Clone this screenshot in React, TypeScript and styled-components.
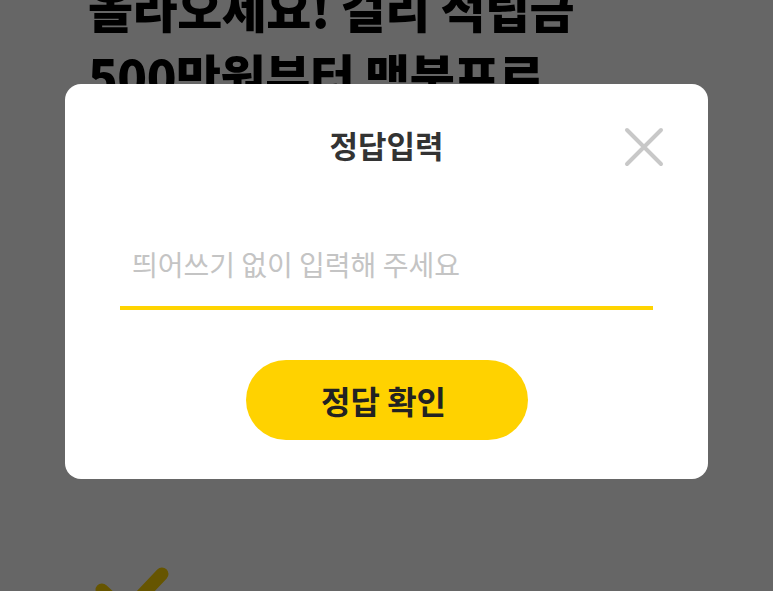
import styled, { createGlobalStyle } from "styled-components"
import { useState } from "react"

const GlobalStyle = createGlobalStyle`
  html, body {
    margin: 0;
    padding: 0;
    background: #fff;
    overflow: hidden;
  }

  body {
    font-family: "Noto Sans CJK KR", "Noto Sans", sans-serif;
  }

  * {
    box-sizing: border-box;
  }
`

const QuizPage = () => {
  const [answer, setAnswer] = useState("")

  return (
    <>
      <GlobalStyle />
      <StyledPage>
        <h1>
          올라오세요! 걸리 적립금
          <br />
          500만원부터 맥북프로
        </h1>
        <svg className="check" width="90" height="60" viewBox="0 0 90 60">
          <polyline
            points="14,30 38,52 74,14"
            fill="none"
            stroke="#ffd400"
            strokeWidth="13"
            strokeLinecap="round"
            strokeLinejoin="round"
          />
        </svg>
      </StyledPage>

      <StyledOverlay>
        <StyledModal>
          <div className="header">
            <span />
            <h2>정답입력</h2>
            <button className="close" aria-label="닫기">
              <svg width="40" height="40" viewBox="0 0 40 40">
                <path
                  d="M3 3 L37 37 M37 3 L3 37"
                  stroke="#c8c8c8"
                  strokeWidth="4"
                  strokeLinecap="round"
                />
              </svg>
            </button>
          </div>

          <input
            value={answer}
            onChange={(e) => setAnswer(e.target.value)}
            placeholder="띄어쓰기 없이 입력해 주세요"
          />

          <button className="submit">정답 확인</button>
        </StyledModal>
      </StyledOverlay>
    </>
  )
}

const StyledPage = styled.div`
  display: flex;
  flex-direction: column;
  align-items: flex-start;
  padding: 0 88px;
  margin-top: -27px;

  h1 {
    margin: 0;
    font-size: 49px;
    line-height: 68px;
    font-weight: 900;
    color: #000;
    white-space: nowrap;
    letter-spacing: -0.5px;
  }

  .check {
    display: block;
    flex-shrink: 0;
    margin-top: 451px;
  }
`

const StyledOverlay = styled.div`
  position: fixed;
  inset: 0;
  background: rgba(0, 0, 0, 0.6);

  display: flex;
  justify-content: center;
  align-items: flex-start;
  padding-top: 84px;
`

const StyledModal = styled.div`
  width: 643px;
  background: #fff;
  border-radius: 16px;

  display: flex;
  flex-direction: column;
  align-items: center;
  padding: 40px 0 39px;

  .header {
    width: 100%;
    height: 46px;
    padding: 0 45px;

    display: grid;
    grid-template-columns: 1fr auto 1fr;
    align-items: center;

    h2 {
      margin: 0;
      font-size: 31px;
      font-weight: 700;
      color: #333;
      line-height: 46px;
      transform: translateY(-2px);
    }

    .close {
      justify-self: end;
      width: 40px;
      height: 40px;
      padding: 0;
      margin-right: -1px;
      border: none;
      background: none;
      display: grid;
      place-items: center;
      cursor: pointer;
    }
  }

  input {
    width: 533px;
    margin-top: 76px;
    padding: 0 12px 24px;
    height: 64px;

    border: none;
    border-bottom: 4px solid #ffd400;
    outline: none;
    background: transparent;

    font-family: "Noto Sans CJK KR", sans-serif;
    font-size: 28px;
    line-height: 36px;
    color: #222;

    &::placeholder {
      color: #c4c4c4;
    }
  }

  .submit {
    margin-top: 50px;
    width: 282px;
    height: 80px;
    padding: 0 6px 0 0;
    border: none;
    border-radius: 40px;
    background: #ffd200;

    font-family: "Noto Sans CJK KR", sans-serif;
    font-size: 32px;
    font-weight: 700;
    color: #222;
    cursor: pointer;
  }
`

export default QuizPage
